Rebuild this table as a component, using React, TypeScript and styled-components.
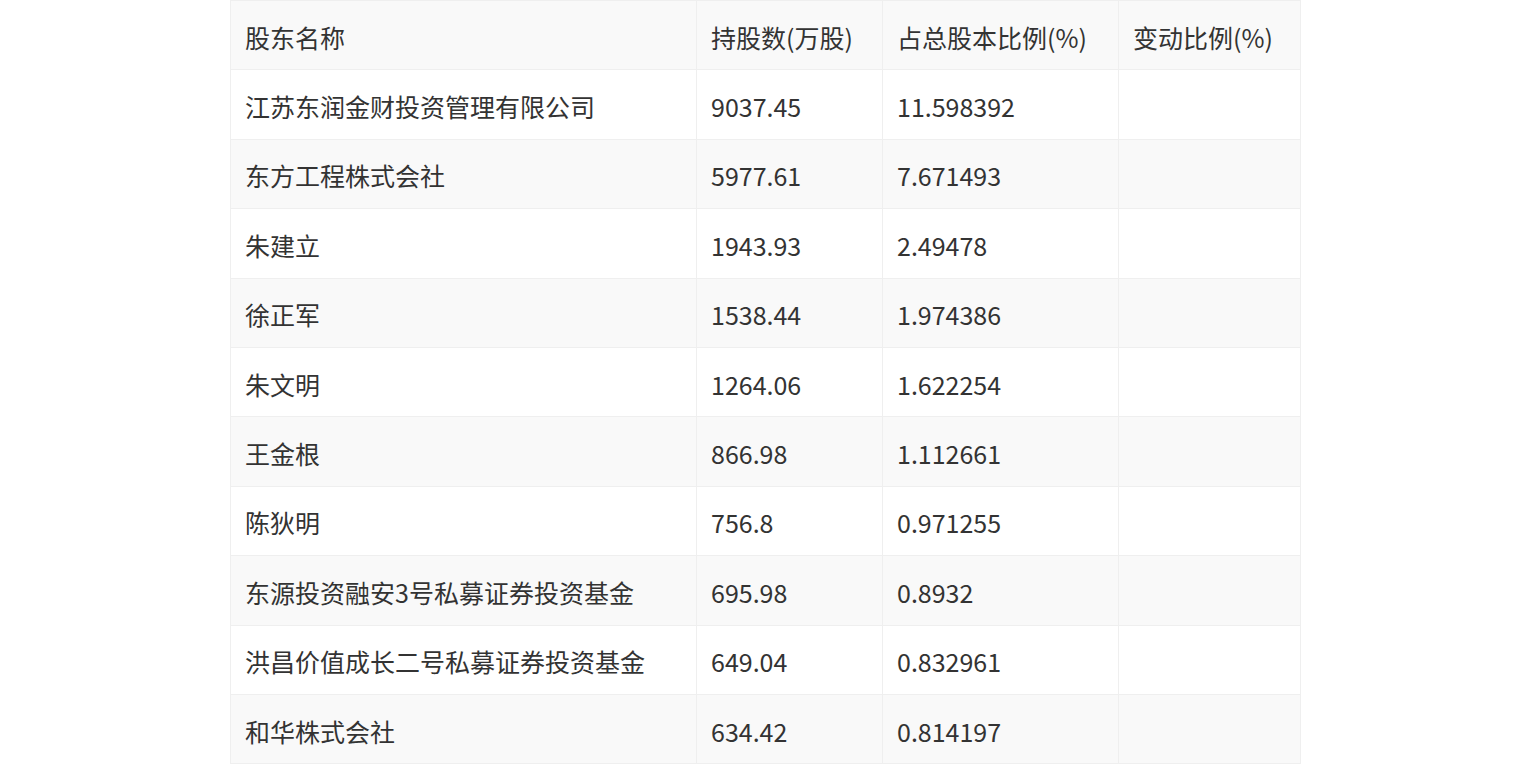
import React from "react";
import styled, { createGlobalStyle } from "styled-components";

const GlobalStyle = createGlobalStyle`
  html, body {
    margin: 0;
    padding: 0;
    background: #ffffff;
  }
  body {
    font-family: "Noto Sans CJK SC", "Noto Sans", sans-serif;
    color: #333333;
  }
`;

const Page = styled.div`
  width: 100%;
  display: flex;
  justify-content: center;
`;

const Table = styled.table`
  width: 1070px;
  border-collapse: collapse;
  table-layout: fixed;
  font-size: 25px;
  color: #333333;
`;

const Row = styled.tr<{ $shade: boolean }>`
  height: 69.4px;
  background: ${(p) => (p.$shade ? "#f9f9f9" : "#ffffff")};
`;

const HeadCell = styled.th`
  border: 1px solid #efefef;
  padding: 3px 15px 0 14px;
  text-align: left;
  font-weight: 400;
  white-space: nowrap;
`;

const Cell = styled.td`
  border: 1px solid #efefef;
  padding: 3px 15px 0 14px;
  text-align: left;
  white-space: nowrap;
`;

const rows: [string, string, string, string][] = [
  ["江苏东润金财投资管理有限公司", "9037.45", "11.598392", ""],
  ["东方工程株式会社", "5977.61", "7.671493", ""],
  ["朱建立", "1943.93", "2.49478", ""],
  ["徐正军", "1538.44", "1.974386", ""],
  ["朱文明", "1264.06", "1.622254", ""],
  ["王金根", "866.98", "1.112661", ""],
  ["陈狄明", "756.8", "0.971255", ""],
  ["东源投资融安3号私募证券投资基金", "695.98", "0.8932", ""],
  ["洪昌价值成长二号私募证券投资基金", "649.04", "0.832961", ""],
  ["和华株式会社", "634.42", "0.814197", ""],
];

export default function App() {
  return (
    <>
      <GlobalStyle />
      <Page>
        <Table>
          <colgroup>
            <col style={{ width: 466 }} />
            <col style={{ width: 186 }} />
            <col style={{ width: 236 }} />
            <col style={{ width: 182 }} />
          </colgroup>
          <thead>
            <Row $shade>
              <HeadCell>股东名称</HeadCell>
              <HeadCell>持股数(万股)</HeadCell>
              <HeadCell>占总股本比例(%)</HeadCell>
              <HeadCell>变动比例(%)</HeadCell>
            </Row>
          </thead>
          <tbody>
            {rows.map((r, i) => (
              <Row key={i} $shade={i % 2 === 1}>
                <Cell>{r[0]}</Cell>
                <Cell>{r[1]}</Cell>
                <Cell>{r[2]}</Cell>
                <Cell>{r[3]}</Cell>
              </Row>
            ))}
          </tbody>
        </Table>
      </Page>
    </>
  );
}
